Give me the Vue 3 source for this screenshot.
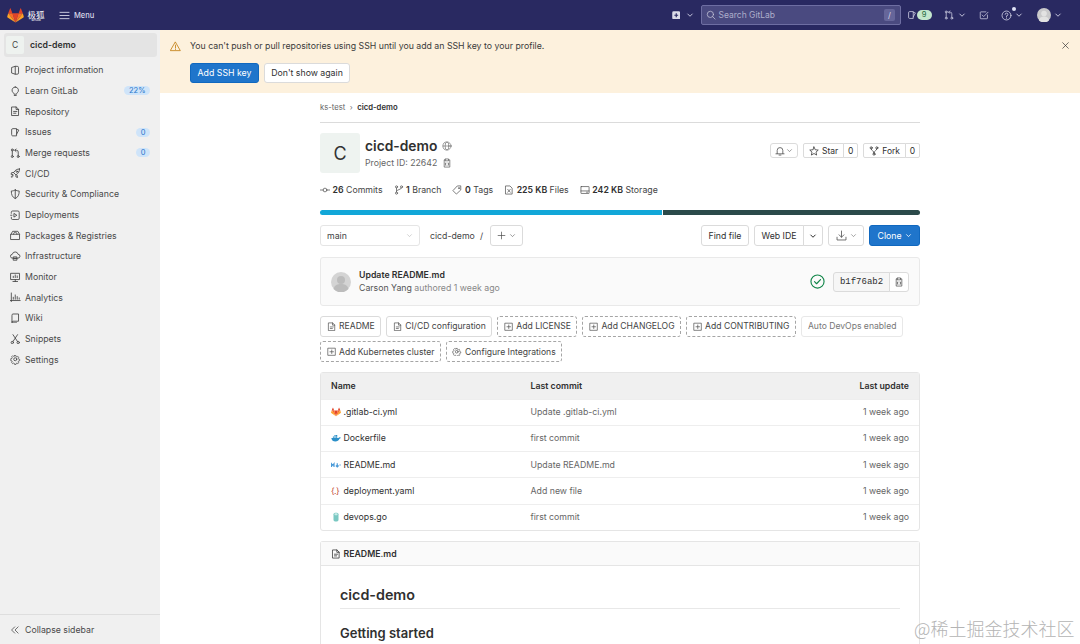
<script setup>
import { h } from 'vue'

const icons = {
  info: '<path d="M3 3.6 8 2v12l-5-1.6z"/><path d="M8 2h3a2 2 0 0 1 2 2v8a2 2 0 0 1-2 2H8"/>',
  bulb: '<path d="M8 1.5a5 5 0 0 0-3 8.9c.7.6 1 1.3 1 2.1h4c0-.8.3-1.5 1-2.1a5 5 0 0 0-3-8.9z"/><path d="M6.5 14.5h3"/>',
  doc: '<path d="M3 1.5h6.5L13 5v9.5H3z"/><path d="M9.3 1.5v3.8H13"/><path d="M5.5 8.3h5M5.5 11h3.5"/>',
  issue: '<path d="M2.5 4a1.5 1.5 0 0 1 1.5-1.5h6v11H4A1.5 1.5 0 0 1 2.5 12z"/><path d="M10 3.5l3.5 1.2-3.5 6.3"/>',
  merge: '<circle cx="3.5" cy="3" r="1.5"/><circle cx="3.5" cy="13" r="1.5"/><circle cx="12.5" cy="13" r="1.5"/><path d="M3.5 4.5v7M12.5 11.5V6a2.5 2.5 0 0 0-2.5-2.5H7.5M9.3 1.5l-2 2 2 2"/>',
  rocket: '<path d="M14.5 1.5c-4 0-6.5 1.5-9 5.5l3.500 3.500c4-2.500 5.500-5 5.500-9z"/><circle cx="10.500" cy="5.500" r="1.200"/><path d="M5.500 7H2.500l-1 2.500 3 .5M9 10.500v3l2.500 1-.5-3M4 11c-1.500.5-2 2-2 3 1 0 2.500-.5 3-2"/>',
  shield: '<path d="M8 1.500c2 1.200 3.800 1.500 6 1.500 0 5.500-1.500 9.500-6 11.500C3.500 12.500 2 8.500 2 3c2.200 0 4-.3 6-1.500z"/><path d="M8 1.500v13"/>',
  deploy: '<path d="M2 5V3.500A2 2 0 0 1 4 1.500h8a2 2 0 0 1 2 2v9a2 2 0 0 1-2 2H4a2 2 0 0 1-2-2V11"/><path d="M6.500 5.500 10.500 8l-4 2.500z"/><path d="M1 8h2"/>',
  pack: '<path d="M1.500 6.500h13v8h-13z"/><path d="M1.500 6.500 4 2h8l2.500 4.500"/><path d="M5.500 6.500C5.500 4 6.500 3.500 8 3.500s2.500.5 2.500 3"/>',
  cloud: '<path d="M4 11a3 3 0 0 1-.5-6A4.500 4.500 0 0 1 12.300 5 3 3 0 0 1 12 11z"/><path d="M5.500 9h5v5h-5zM5.500 11.500h5"/>',
  monitor: '<path d="M1.500 2h13v9.500h-13z"/><path d="M4.500 14.500h7M8 11.500v3M5 8.500V6.500M8 8.500V4.500M11 8.500V6"/>',
  chart: '<path d="M2 1.500v13M.5 13h15M5 11V8M8 11V4.500M11 11V7M14 11V9"/>',
  book: '<path d="M3 3a1.500 1.500 0 0 1 1.500-1.500H13v11H4.500A1.500 1.500 0 0 0 3 14z"/><path d="M3 14a1 1 0 0 0 1 1h6"/>',
  scissors: '<circle cx="3.500" cy="13" r="1.800"/><circle cx="12.500" cy="13" r="1.800"/><path d="M4.500 11.500 11.500 1M11.500 11.500 4.500 1"/>',
  gear: '<circle cx="8" cy="8" r="2.300"/><path d="M6.800 1.500h2.400l.4 1.900 1.500.6 1.600-1 1.700 1.700-1 1.600.6 1.500 1.900.4v2.400l-1.900.4-.6 1.500 1 1.600-1.700 1.700-1.600-1-1.500.6-.4 1.900H6.800l-.4-1.900-1.500-.6-1.600 1-1.700-1.700 1-1.600-.6-1.500-1.900-.4V7l1.900-.4.6-1.500-1-1.600L3.300 1.800l1.600 1 1.500-.6z" transform="translate(1.150 1.150) scale(.856)"/>',
  dbl: '<path d="M7.500 3 2.500 8l5 5M13 3 8 8l5 5"/>',
  warn: '<path d="M8 1.800 15 14H1z"/><path d="M8 6v4M8 11.700v.6"/>',
  x: '<path d="M3 3l10 10M13 3 3 13"/>',
  chev: '<path d="M3.500 6 8 10.500 12.500 6"/>',
  search: '<circle cx="7" cy="7" r="5"/><path d="M10.700 10.700 14.500 14.500"/>',
  todo: '<path d="M13.500 8v5a1 1 0 0 1-1 1h-9.500a1 1 0 0 1-1-1V4a1 1 0 0 1 1-1h8"/><path d="M5 8l2.500 2.500L14.500 3.500"/>',
  help: '<circle cx="8" cy="8" r="6.500"/><path d="M6 6.300A2 2 0 1 1 8 8.500v1M8 11.500v.6"/>',
  globe: '<circle cx="8" cy="8" r="6.500"/><ellipse cx="8" cy="8" rx="3" ry="6.500"/><path d="M1.500 8h13"/>',
  copy: '<path d="M5.500 3H3.500v11.500h9V3h-2"/><path d="M5.500 1.500h5V4.500h-5z"/><path d="M6.500 8H5.500v3.500h1M9.500 8h1v3.500h-1"/>',
  commit: '<circle cx="8" cy="8" r="3"/><path d="M0 8h5M11 8h5"/>',
  branch: '<circle cx="4" cy="3" r="1.700"/><circle cx="12" cy="3" r="1.700"/><circle cx="4" cy="13" r="1.700"/><path d="M4 4.700v6.600M12 4.700c0 3-8 2.500-8 5"/>',
  tag: '<path d="M14 2v6l-7 6.500L1.500 9 8 2z"/><circle cx="11" cy="5" r=".8"/>',
  file: '<path d="M3 1.500h6.500L13 5v9.500H3z"/><path d="M6 7l4 4.500M10 7l-4 4.500"/>',
  disk: '<path d="M2 2.500h12a.5.5 0 0 1 .5.5v10a.5.5 0 0 1-.5.5H2a.5.5 0 0 1-.5-.5V3a.5.5 0 0 1 .5-.5z"/><path d="M1.500 9.500h13M10.500 11.500h1.500"/>',
  bell: '<path d="M3.500 12V7a4.500 4.500 0 0 1 9 0v5M1.500 12.500h13M6.500 14.500h3"/>',
  star: '<path d="m8 1.500 2 4.500 4.800.5-3.600 3.200 1 4.800L8 12l-4.200 2.500 1-4.800L1.200 6.500 6 6z"/>',
  fork: '<circle cx="3.500" cy="3" r="1.700"/><circle cx="12.500" cy="3" r="1.700"/><circle cx="8" cy="13" r="1.700"/><path d="M3.500 4.700C3.500 8 8 7 8 11.300M12.500 4.700C12.500 8 8 7 8 11.300"/>',
  plus: '<path d="M8 2v12M2 8h12"/>',
  download: '<path d="M8 1.500v9M4.500 7 8 10.500 11.500 7M1.500 10.500v4h13v-4"/>',
  addbox: '<path d="M2 2h12v12H2z"/><path d="M8 5v6M5 8h6"/>',
  check: '<circle cx="8" cy="8" r="7"/><path d="m4.800 8.200 2.200 2.200 4.200-4.500"/>'
}

const Icon = (props) =>
  h('svg', {
    viewBox: '0 0 16 16',
    width: props.size || 11,
    height: props.size || 11,
    fill: 'none',
    stroke: 'currentColor',
    'stroke-width': props.sw || 1.2,
    'stroke-linecap': 'round',
    'stroke-linejoin': 'round',
    innerHTML: icons[props.name]
  })
Icon.props = ['name', 'size', 'sw']

const nav = [
  { label: 'Project information', icon: 'info' },
  { label: 'Learn GitLab', icon: 'bulb', badge: '22%' },
  { label: 'Repository', icon: 'doc' },
  { label: 'Issues', icon: 'issue', badge: '0' },
  { label: 'Merge requests', icon: 'merge', badge: '0' },
  { label: 'CI/CD', icon: 'rocket' },
  { label: 'Security & Compliance', icon: 'shield' },
  { label: 'Deployments', icon: 'deploy' },
  { label: 'Packages & Registries', icon: 'pack' },
  { label: 'Infrastructure', icon: 'cloud' },
  { label: 'Monitor', icon: 'monitor' },
  { label: 'Analytics', icon: 'chart' },
  { label: 'Wiki', icon: 'book' },
  { label: 'Snippets', icon: 'scissors' },
  { label: 'Settings', icon: 'gear' }
]

const stats = [
  { icon: 'commit', num: '26', label: 'Commits' },
  { icon: 'branch', num: '1', label: 'Branch' },
  { icon: 'tag', num: '0', label: 'Tags' },
  { icon: 'file', num: '225 KB', label: 'Files' },
  { icon: 'disk', num: '242 KB', label: 'Storage' }
]

const chipRows = [
  [
    { label: 'README', icon: 'doc' },
    { label: 'CI/CD configuration', icon: 'doc' },
    { label: 'Add LICENSE', icon: 'addbox', dashed: true },
    { label: 'Add CHANGELOG', icon: 'addbox', dashed: true },
    { label: 'Add CONTRIBUTING', icon: 'addbox', dashed: true },
    { label: 'Auto DevOps enabled', muted: true }
  ],
  [
    { label: 'Add Kubernetes cluster', icon: 'addbox', dashed: true },
    { label: 'Configure Integrations', icon: 'gear', dashed: true }
  ]
]

const files = [
  { name: '.gitlab-ci.yml', msg: 'Update .gitlab-ci.yml', type: 'fox' },
  { name: 'Dockerfile', msg: 'first commit', type: 'docker' },
  { name: 'README.md', msg: 'Update README.md', type: 'md' },
  { name: 'deployment.yaml', msg: 'Add new file', type: 'yaml' },
  { name: 'devops.go', msg: 'first commit', type: 'go' }
]
</script>

<template>
  <div class="page">
    <header class="topbar">
      <svg class="logo" viewBox="0 0 18 16" width="17" height="15">
        <path fill="#e24329" d="M9 15.500 12.300 5.500H5.700z" />
        <path fill="#fc6d26" d="M9 15.500 5.700 5.500H1.200zM9 15.500l3.300-10h4.500z" />
        <path fill="#fca326" d="M1.200 5.500.2 9c-.1.400 0 .7.300 1L9 15.500zM16.800 5.500l1 3.500c.1.400 0 .7-.3 1L9 15.500z" />
        <path fill="#e24329" d="M1.200 5.500h4.500L3.800.4c-.1-.3-.5-.3-.6 0zM16.800 5.500h-4.500L14.200.4c.1-.3.500-.3.6 0z" />
      </svg>
      <div class="brand">
        <span class="brand-cn">极狐</span>
        <span class="brand-en">GITLAB</span>
      </div>
      <svg class="menu-icon" viewBox="0 0 12 10" width="11" height="9" fill="none" stroke="#d8d8e8" stroke-width="1"><path d="M.5 1.500h11M.5 5h11M.5 8.500h11" /></svg>
      <span class="menu-label">Menu</span>
      <span class="grow"></span>
      <svg class="add-icon" viewBox="0 0 9 9" width="8.500" height="8.500"><rect width="8.500" height="8.500" x=".25" y=".25" rx="1.500" fill="#dcdce8" /><path d="M4.500 2.500v4M2.500 4.500h4" stroke="#292961" stroke-width="1.200" /></svg>
      <Icon name="chev" class="top-chev add-chev" :size="8" :sw="1.800" />
      <div class="search">
        <Icon name="search" :size="10" />
        <span class="search-text">Search GitLab</span>
        <span class="grow"></span>
        <kbd class="slash">/</kbd>
      </div>
      <Icon name="issue" class="top-ic ic-issue" :size="10" />
      <span class="top-badge">9</span>
      <Icon name="merge" class="top-ic ic-merge" :size="10" />
      <Icon name="chev" class="top-chev" :size="8" :sw="1.800" />
      <Icon name="todo" class="top-ic ic-todo" :size="10" />
      <span class="help-wrap">
        <Icon name="help" class="top-ic" :size="11" />
        <i class="help-dot"></i>
      </span>
      <Icon name="chev" class="top-chev help-chev" :size="8" :sw="1.800" />
      <svg class="top-avatar" viewBox="0 0 15 15" width="14" height="14">
        <circle cx="7.500" cy="7.500" r="7.500" fill="#c9c9cb" />
        <circle cx="7.500" cy="6" r="3" fill="#e2e2e2" />
        <path d="M2 13c1-3 3-3.500 5.500-3.500S12 10 13 13a7.500 7.500 0 0 1-11 0z" fill="#e2e2e2" />
      </svg>
      <Icon name="chev" class="top-chev avatar-chev" :size="8" :sw="1.800" />
    </header>

    <div class="body">
      <aside class="sidebar">
        <div class="side-project">
          <span class="side-avatar">C</span>
          <span class="side-name">cicd-demo</span>
        </div>
        <nav class="side-nav">
          <a v-for="item in nav" :key="item.label" class="side-item">
            <Icon :name="item.icon" :size="10.500" :sw="1.300" class="side-icon" />
            <span class="side-label">{{ item.label }}</span>
            <span v-if="item.badge" class="side-badge">{{ item.badge }}</span>
          </a>
        </nav>
        <div class="collapse">
          <Icon name="dbl" :size="10" class="side-icon" />
          <span>Collapse sidebar</span>
        </div>
      </aside>

      <main class="main">
        <section class="alert">
          <Icon name="warn" class="alert-icon" :size="11" />
          <div class="alert-body">
            <p class="alert-text">You can't push or pull repositories using SSH until you add an SSH key to your profile.</p>
            <div class="alert-actions">
              <button class="btn btn-blue ssh">Add SSH key</button>
              <button class="btn dismiss">Don't show again</button>
            </div>
          </div>
          <Icon name="x" class="alert-close" :size="9" />
        </section>

        <div class="content">
          <div class="crumbs">
            <span class="crumb-link">ks-test</span>
            <span class="crumb-sep">›</span>
            <b class="crumb-cur">cicd-demo</b>
          </div>

          <div class="project-head">
            <div class="project-avatar">C</div>
            <div class="project-title">
              <div class="title-row">
                <h1 class="title">cicd-demo</h1>
                <Icon name="globe" :size="10" :sw="1" class="muted-ic" />
              </div>
              <div class="project-id">
                <span>Project ID: 22642</span>
                <Icon name="copy" :size="10" :sw="1.100" class="copy-ic" />
              </div>
            </div>
            <span class="grow"></span>
            <div class="head-actions">
              <button class="btn mini bell"><Icon name="bell" :size="10" /><Icon name="chev" :size="7" /></button>
              <div class="group">
                <button class="btn mini"><Icon name="star" :size="10" />Star</button>
                <button class="btn mini count">0</button>
              </div>
              <div class="group">
                <button class="btn mini"><Icon name="fork" :size="10" />Fork</button>
                <button class="btn mini count">0</button>
              </div>
            </div>
          </div>

          <div class="stats">
            <span v-for="s in stats" :key="s.label" class="stat">
              <Icon :name="s.icon" :size="10" class="stat-ic" />
              <span><b>{{ s.num }}</b> {{ s.label }}</span>
            </span>
          </div>

          <div class="langbar">
            <span class="lang-a"></span>
            <span class="lang-b"></span>
          </div>

          <div class="controls">
            <div class="branch-select">
              <span>main</span>
              <Icon name="chev" :size="7" class="faint" />
            </div>
            <span class="path">cicd-demo</span>
            <span class="path-sep">/</span>
            <button class="btn plus-btn"><Icon name="plus" :size="9" /><Icon name="chev" :size="7" /></button>
            <span class="grow"></span>
            <button class="btn find">Find file</button>
            <div class="group ide">
              <button class="btn ide-main">Web IDE</button>
              <button class="btn ide-arrow"><Icon name="chev" :size="8" :sw="2" /></button>
            </div>
            <button class="btn dl"><Icon name="download" :size="11" /><Icon name="chev" :size="7" /></button>
            <button class="btn btn-blue clone">Clone <Icon name="chev" :size="7" :sw="1.800" /></button>
          </div>

          <div class="commit">
            <svg class="commit-avatar" viewBox="0 0 20 20" width="20" height="20">
              <circle cx="10" cy="10" r="10" fill="#d4d4d4" />
              <circle cx="10" cy="8" r="4" fill="#bcbcbc" />
              <path d="M2.500 17c1-4 4-5 7.500-5s6.500 1 7.500 5a10 10 0 0 1-15 0z" fill="#bcbcbc" />
            </svg>
            <div class="commit-text">
              <div class="commit-title">Update README.md</div>
              <div class="commit-meta"><span class="author">Carson Yang</span> authored 1 week ago</div>
            </div>
            <span class="grow"></span>
            <Icon name="check" class="pipeline" :size="15" :sw="1.200" />
            <div class="group sha">
              <span class="sha-text">b1f76ab2</span>
              <button class="btn sha-copy"><Icon name="copy" :size="10" :sw="1.100" /></button>
            </div>
          </div>

          <div class="chips">
            <div v-for="(row, i) in chipRows" :key="i" class="chip-row">
              <span
                v-for="c in row"
                :key="c.label"
                class="chip"
                :class="{ dashed: c.dashed, muted: c.muted }"
              >
                <Icon v-if="c.icon" :name="c.icon" :size="9.500" :sw="1.100" />
                {{ c.label }}
              </span>
            </div>
          </div>

          <div class="tree">
            <div class="tree-row tree-head">
              <span>Name</span>
              <span>Last commit</span>
              <span class="right">Last update</span>
            </div>
            <div v-for="f in files" :key="f.name" class="tree-row">
              <span class="fname">
                <svg v-if="f.type === 'fox'" viewBox="0 0 18 16" width="10" height="10">
                  <path fill="#e24329" d="M9 15.500 12.300 5.500H5.700z" />
                  <path fill="#fc6d26" d="M9 15.500 5.700 5.500H1.200zM9 15.500l3.300-10h4.500z" />
                  <path fill="#fca326" d="M1.200 5.500.2 9c-.1.400 0 .7.300 1L9 15.500zM16.800 5.500l1 3.500c.1.400 0 .7-.3 1L9 15.500z" />
                  <path fill="#e24329" d="M1.200 5.500h4.500L3.800.4c-.1-.3-.5-.3-.6 0zM16.800 5.500h-4.500L14.200.4c.1-.3.500-.3.600 0z" />
                </svg>
                <svg v-else-if="f.type === 'docker'" viewBox="0 0 16 16" width="10" height="10">
                  <path fill="#2a8fc8" d="M.500 8h11.500c.5-1.200 1.500-1.500 3.500-1-.3 1.200-1 2-2 2.200-1 3-3.500 4.300-6.500 4.300-3.500 0-6-1.500-6.500-5.500z" />
                  <path fill="#2a8fc8" d="M3 5.500h2v2H3zM5.500 5.500h2v2h-2zM8 5.500h2v2H8zM5.500 3h2v2h-2zM8 3h2v2H8z" />
                </svg>
                <svg v-else-if="f.type === 'md'" viewBox="0 0 16 16" width="10" height="10" fill="none" stroke="#4a9ad8" stroke-width="1.900">
                  <path d="M.800 11V6l2 2.500 2-2.500v5M10 5v6M7.800 8.800 10 11l2.200-2.200" />
                  <path d="M13.500 8h2" />
                </svg>
                <span v-else-if="f.type === 'yaml'" class="yaml-ic">{.}</span>
                <svg v-else viewBox="0 0 16 16" width="10" height="10">
                  <rect x="4" y="1" width="8" height="14" rx="2.500" fill="#7ac8c2" />
                  <rect x="5.500" y="2" width="5" height="3" rx="1" fill="#c8ebe8" />
                </svg>
                <span class="fname-text">{{ f.name }}</span>
              </span>
              <span class="fmsg">{{ f.msg }}</span>
              <span class="right fmsg">1 week ago</span>
            </div>
          </div>

          <div class="readme">
            <div class="readme-head">
              <Icon name="doc" :size="10" />
              <b>README.md</b>
            </div>
            <div class="readme-body">
              <h2 class="md-h1">cicd-demo</h2>
              <h3 class="md-h2">Getting started</h3>
            </div>
          </div>
        </div>
      </main>
    </div>

    <div class="watermark">@稀土掘金技术社区</div>
  </div>
</template>

<style>
html, body { margin: 0; padding: 0; overflow: hidden; background: #fff; }
</style>

<style scoped>
.page {
  position: relative;
  width: 1080px;
  height: 644px;
  overflow: hidden;
  font-family: Inter, "Noto Sans", "Liberation Sans", sans-serif;
  font-size: 8.750px;
  color: #303030;
  background: #fff;
  -webkit-font-smoothing: antialiased;
}
* { box-sizing: border-box; }
.grow { flex: 1; }
p, h1, h2, h3 { margin: 0; }

.topbar {
  height: 30px;
  background: #292961;
  display: flex;
  align-items: center;
  padding-left: 7px;
  color: #d1d1e6;
}
.logo { flex: none; }
.brand { display: flex; flex-direction: column; align-items: center; margin-left: 3px; width: 18px; color: #fff; line-height: 1; }
.brand-cn { font-family: "Noto Sans CJK SC", sans-serif; font-size: 8.500px; line-height: 10px; }
.brand-en { font-size: 2.500px; line-height: 3px; font-weight: 600; }
.menu-icon { margin-left: 14px; }
.menu-label { margin-left: 4px; font-size: 7.500px; font-weight: 500; color: #d8d8e8; }
.add-chev { margin-left: 6px; }
.top-chev { flex: none; }
.search {
  width: 200px;
  height: 20px;
  margin-left: 7px;
  display: flex;
  align-items: center;
  padding: 0 5px 0 4px;
  border: 1px solid #6e6ea2;
  border-radius: 2px;
  background: #4a4a80;
  color: #c4c4d8;
  gap: 2.500px;
}
.search-text { font-size: 8.500px; color: #aeaecb; }
.slash {
  width: 11px;
  height: 12px;
  background: #66669a;
  border-radius: 2px;
  font-family: Inter, sans-serif;
  font-size: 8px;
  color: #d8d8e8;
  text-align: center;
  line-height: 12px;
}
.ic-issue { margin-left: 6px; }
.top-badge {
  width: 15px;
  height: 10px;
  margin-left: -.5px;
  border-radius: 5px;
  background: #c3e6cd;
  color: #24663b;
  font-size: 7.500px;
  text-align: center;
  line-height: 10px;
}
.ic-merge { margin-left: 12.500px; }
.ic-merge + .top-chev { margin-left: 4px; }
.ic-todo { margin-left: 13px; }
.help-wrap { position: relative; display: flex; margin-left: 12px; }
.help-dot { position: absolute; top: -3px; right: -4px; width: 4px; height: 4px; border-radius: 50%; background: #dfe2f5; }
.help-chev { margin-left: 3px; }
.top-avatar { margin-left: 14px; }
.avatar-chev { margin-left: 3px; margin-right: 18px; }

.body { display: flex; height: 614px; }

.sidebar {
  width: 160px;
  flex: none;
  background: #f0f0f0;
  display: flex;
  flex-direction: column;
}
.side-project {
  height: 24px;
  margin: 3px 3px 3px 4px;
  padding-left: 2px;
  background: #e4e4e4;
  border-radius: 3px;
  display: flex;
  align-items: center;
  gap: 6px;
}
.side-avatar {
  width: 18px;
  height: 18px;
  background: #eef2ef;
  border-radius: 2px;
  display: flex;
  align-items: center;
  justify-content: center;
  color: #444;
  font-size: 8.500px;
}
.side-name { font-weight: 600; font-size: 8.750px; color: #303030; }
.side-nav { display: flex; flex-direction: column; flex: 1; }
.side-item {
  height: 20.670px;
  display: flex;
  align-items: center;
  padding: 0 10px;
  color: #4a4a4a;
}
.side-icon { flex: none; color: #444; }
.side-label { margin-left: 4.500px; flex: 1; }
.side-badge {
  min-width: 14px;
  height: 9px;
  padding: 0 4.500px;
  border-radius: 5px;
  background: #cfe4f9;
  color: #1f75cb;
  font-size: 7.500px;
  line-height: 9px;
  text-align: center;
}
.collapse {
  height: 30px;
  border-top: 1px solid #dedede;
  display: flex;
  align-items: center;
  padding-left: 10px;
  gap: 5px;
  color: #4a4a4a;
}

.main { flex: 1; min-width: 0; }
.alert {
  height: 63px;
  background: #fdf1dd;
  display: flex;
  padding: 11px 10px 0 10px;
}
.alert-icon { color: #c17d10; flex: none; }
.alert-body { margin-left: 9px; flex: 1; }
.alert-text { line-height: 11px; color: #3a3a3a; }
.alert-actions { display: flex; gap: 5px; margin-top: 11px; }
.alert-close { color: #303030; flex: none; }

.btn {
  height: 20px;
  display: inline-flex;
  align-items: center;
  justify-content: center;
  gap: 3px;
  padding: 0 7px;
  font-family: inherit;
  font-size: 8.750px;
  color: #303030;
  background: #fff;
  border: 1px solid #dbdbdb;
  border-radius: 3px;
  white-space: nowrap;
}
.btn-blue { background: #1f75cb; border-color: #1068bf; color: #fff; }
.ssh { width: 69px; padding: 0; }
.dismiss { width: 86px; padding: 0; background: #fff; }

.content { width: 600px; margin-left: 160px; }
.crumbs {
  height: 30px;
  border-bottom: 1px solid #dbdbdb;
  display: flex;
  align-items: center;
  gap: 4.500px;
  font-size: 7.700px;
}
.crumb-link { color: #666; }
.crumb-sep { color: #777; }
.crumb-cur { font-weight: 600; color: #303030; }

.project-head { display: flex; margin-top: 10px; height: 40px; }
.project-avatar {
  width: 40px;
  height: 40px;
  background: #eef3f0;
  border-radius: 3px;
  display: flex;
  align-items: center;
  justify-content: center;
  font-size: 18px;
  color: #333;
}
.project-title { margin-left: 5px; padding-top: 4px; }
.title-row { display: flex; align-items: center; gap: 5px; height: 18px; }
.title { font-size: 13.800px; font-weight: 600; color: #303030; }
.muted-ic { color: #666; }
.project-id { display: flex; align-items: center; gap: 5px; margin-top: 1.500px; color: #666; height: 12px; }
.copy-ic { color: #555; }
.head-actions { display: flex; gap: 5px; align-items: flex-start; margin-top: 10px; }
.group { display: flex; }
.mini { height: 15px; padding: 0 5px; font-size: 8.500px; }
.bell { width: 28px; padding: 0; gap: 1px; color: #444; }
.group .mini:first-child { border-radius: 2px 0 0 2px; }
.count { width: 15px; padding: 0; margin-left: -1px; border-radius: 0 2px 2px 0; }

.stats { display: flex; margin-top: 11px; height: 12px; align-items: center; gap: 11px; }
.stat { display: flex; align-items: center; gap: 2.500px; color: #444; white-space: nowrap; }
.stat b { font-weight: 600; color: #303030; }
.stat-ic { color: #555; }

.langbar { display: flex; gap: 1px; height: 5px; margin-top: 14px; }
.lang-a { width: 342px; background: #12a7d8; border-radius: 3px 0 0 3px; }
.lang-b { flex: 1; background: #2b4a4a; border-radius: 0 3px 3px 0; }

.controls { display: flex; align-items: center; height: 21px; margin-top: 10px; }
.controls .btn { height: 21px; }
.branch-select {
  width: 100px;
  height: 21px;
  border: 1px solid #e5e5e5;
  border-radius: 3px;
  display: flex;
  align-items: center;
  justify-content: space-between;
  padding: 0 6px;
  color: #444;
}
.faint { color: #aaa; }
.path { margin-left: 10px; color: #444; }
.path-sep { margin-left: 5px; margin-right: 7px; color: #444; }
.plus-btn { width: 33px; padding: 0; gap: 3px; color: #444; }
.find { width: 48px; padding: 0; }
.ide { margin-left: 5px; }
.ide-main { width: 50px; padding: 0; border-radius: 3px 0 0 3px; }
.ide-arrow { width: 20px; padding: 0; margin-left: -1px; border-radius: 0 3px 3px 0; }
.dl { width: 36px; margin-left: 5px; padding: 0; gap: 3px; color: #555; }
.clone { width: 51px; margin-left: 5px; padding: 0; }

.commit {
  height: 49px;
  margin-top: 11px;
  border: 1px solid #e9e9e9;
  border-radius: 3px;
  background: #fafafa;
  display: flex;
  align-items: center;
  padding: 0 10px;
}
.commit-text { margin-left: 8px; }
.commit-title { font-weight: 600; color: #303030; line-height: 13px; }
.commit-meta { color: #888; line-height: 13px; }
.author { color: #555; }
.pipeline { color: #108548; }
.sha { margin-left: 8px; height: 20px; }
.sha-text {
  width: 57px;
  border: 1px solid #dbdbdb;
  border-radius: 3px 0 0 3px;
  background: #f6f6f6;
  font-family: "Liberation Mono", monospace;
  font-size: 9px;
  display: flex;
  align-items: center;
  justify-content: center;
  color: #303030;
}
.sha-copy { width: 20px; padding: 0; margin-left: -1px; border-radius: 0 3px 3px 0; color: #444; }

.chips { margin-top: 10px; display: flex; flex-direction: column; gap: 4.500px; }
.chip-row { display: flex; gap: 5px; }
.chip {
  height: 20.750px;
  padding: 0 5.500px;
  border: 1px solid #dbdbdb;
  border-radius: 3px;
  display: inline-flex;
  align-items: center;
  gap: 3px;
  font-size: 8.600px;
  color: #444;
  white-space: nowrap;
}
.chip.dashed { border: 1px dashed #a5a5a5; }
.chip.muted { color: #777; border-color: #e8e8e8; padding: 0 6px; }

.tree {
  margin-top: 9.500px;
  border: 1px solid #e5e5e5;
  border-radius: 3px;
}
.tree-row {
  display: grid;
  grid-template-columns: 199.500px 1fr auto;
  align-items: center;
  height: 26.300px;
  padding: 0 10px;
  border-top: 1px solid #eee;
}
.tree-head { border-top: 0; height: 26px; background: #f0f0f0; font-weight: 600; color: #303030; }
.right { text-align: right; }
.fname { display: flex; align-items: center; gap: 2.500px; color: #303030; }
.fmsg { color: #666; }
.yaml-ic { width: 10px; color: #c0432b; font-size: 8.500px; white-space: nowrap; letter-spacing: -.5px; }

.readme { margin-top: 10px; border: 1px solid #e5e5e5; border-radius: 3px 3px 0 0; border-bottom: 0; height: 110px; }
.readme-head {
  height: 24.500px;
  background: #fafafa;
  border-bottom: 1px solid #e5e5e5;
  display: flex;
  align-items: center;
  padding: 0 10px;
  gap: 2.500px;
}
.readme-head b { font-weight: 600; color: #303030; }
.readme-body { padding: 18.500px 19px 0; }
.md-h1 { font-size: 14.300px; font-weight: 600; line-height: 19px; padding-bottom: 4px; border-bottom: 1px solid #e8e8e8; color: #303030; }
.md-h2 { margin-top: 16px; font-size: 13px; font-weight: 600; line-height: 16px; color: #303030; }

.watermark {
  position: absolute;
  left: 914px;
  top: 616px;
  font-family: "Noto Sans CJK SC", sans-serif;
  font-size: 18px;
  font-weight: 300;
  line-height: 24px;
  color: #b4b4b4;
  white-space: nowrap;
}
</style>
